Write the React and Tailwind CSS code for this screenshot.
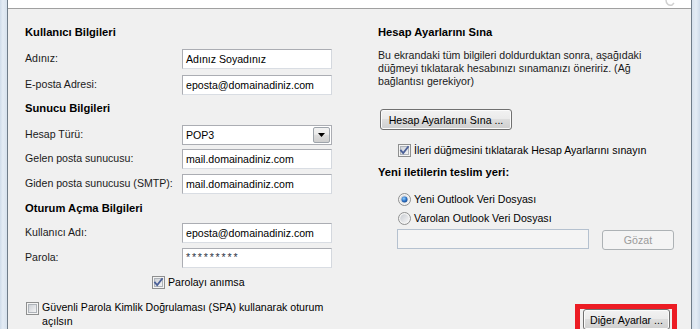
import React from "react";

const font = { fontFamily: '"Liberation Sans", Arial, sans-serif' };

function Checkbox({ checked }) {
  return (
    <svg width="13" height="13" viewBox="0 0 13 13" className="shrink-0">
      <defs>
        <linearGradient id={checked ? "cbg1" : "cbg0"} x1="0" y1="0" x2="1" y2="1">
          <stop offset="0" stopColor="#cbcfd5" />
          <stop offset="1" stopColor="#f6f6f6" />
        </linearGradient>
      </defs>
      <rect x="0.5" y="0.5" width="12" height="12" fill="#f4f4f4" stroke="#8e8f8f" />
      <rect x="2.5" y="2.5" width="8" height="8" fill={`url(#${checked ? "cbg1" : "cbg0"})`} stroke="#aeb3b9" strokeWidth="1" />
      {checked && (
        <path d="M3 6.5 L5.2 9 L10 3" fill="none" stroke="#4a5f97" strokeWidth="1.8" strokeLinecap="square" />
      )}
    </svg>
  );
}

function Radio({ checked }) {
  return (
    <svg width="13" height="13" viewBox="0 0 13 13" className="shrink-0">
      <defs>
        <radialGradient id="rdot" cx="0.4" cy="0.35" r="0.7">
          <stop offset="0" stopColor="#8fd0ff" />
          <stop offset="0.6" stopColor="#2a6fc4" />
          <stop offset="1" stopColor="#1c4a8c" />
        </radialGradient>
        <linearGradient id="rbg" x1="0" y1="0" x2="1" y2="1">
          <stop offset="0" stopColor="#c8ccd2" />
          <stop offset="1" stopColor="#f7f7f7" />
        </linearGradient>
      </defs>
      <circle cx="6.5" cy="6.5" r="6" fill="#f4f4f4" stroke="#8e8f8f" />
      <circle cx="6.5" cy="6.5" r="4.3" fill="url(#rbg)" />
      {checked && <circle cx="6.5" cy="6.5" r="3" fill="url(#rdot)" />}
    </svg>
  );
}

function Input({ value, className = "" }) {
  return (
    <div
      className={`h-[20px] w-[150px] bg-white border border-[#abadb3] border-b-[#d9dde3] border-r-[#d4d8de] pl-[3px] flex items-center text-black ${className}`}
    >
      {value}
    </div>
  );
}

const btnBg =
  "bg-[linear-gradient(to_bottom,#f2f2f2_0%,#ebebeb_45%,#dddddd_50%,#cfcfcf_100%)]";

function Row({ label, children }) {
  return (
    <div className="flex items-center">
      <div className="w-[157px] text-[#1a1a1a] -mt-[2px]">{label}</div>
      {children}
    </div>
  );
}

export default function App() {
  return (
    <div className="w-[700px] h-[329px] overflow-hidden flex text-[10.6px] leading-[14px]" style={font}>
      {/* left window frame */}
      <div className="w-[8px] h-full border-r border-[#6f7c89] bg-[linear-gradient(to_right,#cfdcea,#e4ecf5_40%,#d6e1ed)]" />

      <div className="w-[683px] h-full flex flex-col">
        {/* header strip */}
        <div className="h-[12px] bg-white border-b border-[#a0a0a0] flex justify-end pr-[14px]">
          <svg width="14" height="8" viewBox="0 0 14 8">
            <path d="M3 0 C3 4 6 6 9 5 L11 3" fill="none" stroke="#d0d0d0" strokeWidth="1.5" />
          </svg>
        </div>

        <div className="flex-1 bg-[#f0f0f0] flex">
          {/* left column */}
          <div className="w-[370px] pl-[17px] flex flex-col">
            <div className="mt-[16px] font-bold text-[11.2px] text-black">Kullanıcı Bilgileri</div>
            <div className="mt-[10px]">
              <Row label="Adınız:">
                <Input value="Adınız Soyadınız" />
              </Row>
            </div>
            <div className="mt-[6px]">
              <Row label="E-posta Adresi:">
                <Input value="eposta@domainadiniz.com" />
              </Row>
            </div>
            <div className="mt-[6px] font-bold text-[11.2px] text-black">Sunucu Bilgileri</div>
            <div className="mt-[10px]">
              <Row label="Hesap Türü:">
                <div className="h-[20px] w-[150px] bg-white border border-[#abadb3] flex items-center pl-[3px]">
                  <span className="flex-1">POP3</span>
                  <div className={`w-[17px] h-[16px] mr-[1px] border border-[#9ea4ab] rounded-[2px] ${btnBg} flex items-center justify-center`}>
                    <svg width="7" height="4" viewBox="0 0 7 4">
                      <path d="M0 0 H7 L3.5 4 Z" fill="#000" />
                    </svg>
                  </div>
                </div>
              </Row>
            </div>
            <div className="mt-[4px]">
              <Row label="Gelen posta sunucusu:">
                <Input value="mail.domainadiniz.com" />
              </Row>
            </div>
            <div className="mt-[5px]">
              <Row label="Giden posta sunucusu (SMTP):">
                <Input value="mail.domainadiniz.com" />
              </Row>
            </div>
            <div className="mt-[7px] font-bold text-[11.2px] text-black">Oturum Açma Bilgileri</div>
            <div className="mt-[8px]">
              <Row label="Kullanıcı Adı:">
                <Input value="eposta@domainadiniz.com" />
              </Row>
            </div>
            <div className="mt-[5px]">
              <Row label="Parola:">
                <Input value={<span className="text-[#2c3444] tracking-[1.8px] text-[10.6px] -mt-[2px]">*********</span>} />
              </Row>
            </div>
            <div className="mt-[7px] ml-[127px] flex items-center gap-[3px] h-[14px]">
              <Checkbox checked />
              <span>Parolayı anımsa</span>
            </div>
            <div className="mt-[11px] ml-[1px] flex items-start gap-[3px]">
              <div className="mt-[2px]">
                <Checkbox />
              </div>
              <span>
                Güvenli Parola Kimlik Doğrulaması (SPA) kullanarak oturum
                <br />
                açılsın
              </span>
            </div>
          </div>

          {/* right column */}
          <div className="flex-1 flex flex-col">
            <div className="mt-[16px] font-bold text-[11.2px] text-black">Hesap Ayarlarını Sına</div>
            <div className="mt-[10px] leading-[13px] text-[#1a1a1a]">
              Bu ekrandaki tüm bilgileri doldurduktan sonra, aşağıdaki
              <br />
              düğmeyi tıklatarak hesabınızı sınamanızı öneririz. (Ağ
              <br />
              bağlantısı gerekiyor)
            </div>
            <div className="mt-[21px] ml-[2px]">
              <div className={`w-[132px] h-[21px] border border-[#707070] rounded-[3px] ${btnBg} shadow-[inset_0_0_0_1px_#fbfbfb] flex items-center justify-center text-black`}>
                Hesap Ayarlarını Sına ...
              </div>
            </div>
            <div className="mt-[13px] ml-[20px] flex items-center gap-[3px] h-[14px]">
              <Checkbox checked />
              <span>İleri düğmesini tıklatarak Hesap Ayarlarını sınayın</span>
            </div>
            <div className="mt-[8px] font-bold text-[11.2px] text-black">Yeni iletilerin teslim yeri:</div>
            <div className="mt-[13px] ml-[20px] flex items-center gap-[3px] h-[14px]">
              <Radio checked />
              <span>Yeni Outlook Veri Dosyası</span>
            </div>
            <div className="mt-[5px] ml-[20px] flex items-center gap-[3px] h-[14px]">
              <Radio />
              <span>Varolan Outlook Veri Dosyası</span>
            </div>
            <div className="mt-[4px] ml-[19px] flex items-start gap-[13px]">
              <div className="w-[192px] h-[20px] border border-[#b5c1cf] bg-[#f4f4f4]" />
              <div className="mt-[1px] w-[72px] h-[20px] border border-[#adb2b5] rounded-[3px] bg-[#f4f4f4] flex items-center justify-center text-[#9a9a9a]">
                Gözat
              </div>
            </div>
            <div className="mt-[54px] ml-[197px] w-[102px] h-[30px] border-[5px] border-[#ec1c24] pl-[3px]">
              <div className={`w-[87px] h-[21px] border border-[#707070] rounded-[3px] ${btnBg} shadow-[inset_0_0_0_1px_#fbfbfb] flex items-center justify-center text-black`}>
                Diğer Ayarlar ...
              </div>
            </div>
          </div>
        </div>
      </div>

      {/* right window frame */}
      <div className="w-[9px] h-full border-l border-[#6f7c89] bg-[linear-gradient(to_right,#d6e1ed,#e4ecf5_50%,#cfdcea)]" />
    </div>
  );
}
